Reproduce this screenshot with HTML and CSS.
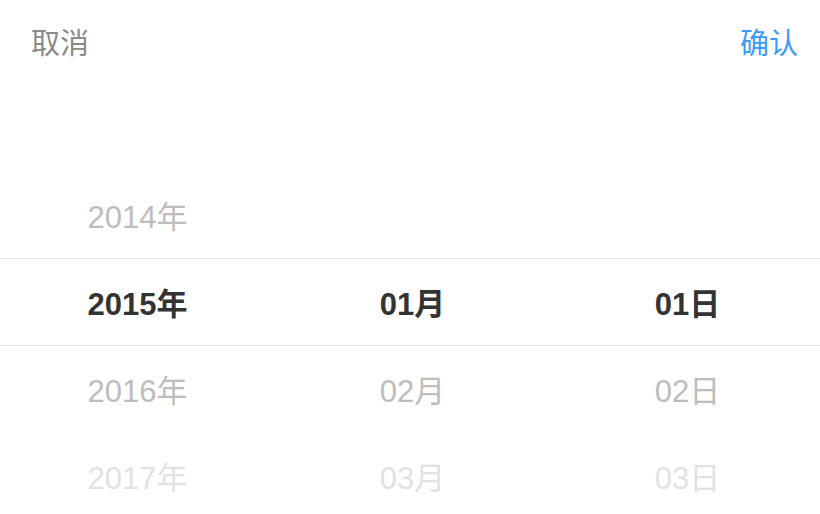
FILE: index.html
```html
<!DOCTYPE html>
<html lang="zh-CN">
<head>
  <meta charset="UTF-8">
  <meta name="viewport" content="width=device-width, initial-scale=1.0">
  <title>选择日期</title>
  <link rel="stylesheet" href="styles.css">
</head>
<body>
  <div class="toolbar">
    <button class="btn-cancel">取消</button>
    <button class="btn-confirm">确认</button>
  </div>
  <div class="picker">
    <div class="indicator"></div>
    <ul class="column">
      <li class="item"></li>
      <li class="item near">2014年</li>
      <li class="item selected">2015年</li>
      <li class="item near">2016年</li>
      <li class="item far">2017年</li>
    </ul>
    <ul class="column">
      <li class="item"></li>
      <li class="item"></li>
      <li class="item selected">01月</li>
      <li class="item near">02月</li>
      <li class="item far">03月</li>
    </ul>
    <ul class="column">
      <li class="item"></li>
      <li class="item"></li>
      <li class="item selected">01日</li>
      <li class="item near">02日</li>
      <li class="item far">03日</li>
    </ul>
  </div>
</body>
</html>
```

FILE: styles.css
```css
body {
  margin: 0;
  background-color: #fff;
  font-family: "Liberation Sans", "Noto Sans CJK SC", sans-serif;
  overflow: hidden;
}
.toolbar {
  display: flex;
  justify-content: space-between;
  align-items: center;
  height: 82px;
  padding: 0 22px 2px 31px;
}
.toolbar button {
  background: none;
  border: none;
  padding: 0;
  font-family: inherit;
  font-size: 29px;
  cursor: pointer;
}
.btn-cancel {
  color: #8a8a8a;
}
.btn-confirm {
  color: #3a9bfc;
}
.picker {
  position: relative;
  display: grid;
  grid-template-columns: repeat(3, 275px);
}
.indicator {
  position: absolute;
  left: 0;
  right: 0;
  top: 174px;
  height: 88px;
  box-sizing: border-box;
  border-top: 1px solid #e3e3e3;
  border-bottom: 1px solid #e3e3e3;
  pointer-events: none;
}
.column {
  list-style: none;
  margin: 0;
  padding: 0;
}
.item {
  height: 87px;
  display: flex;
  align-items: center;
  justify-content: center;
  font-size: 31px;
}
.selected {
  color: #333;
  font-weight: bold;
}
.near {
  color: #bdbdbd;
}
.far {
  color: #e2e2e2;
}
```
